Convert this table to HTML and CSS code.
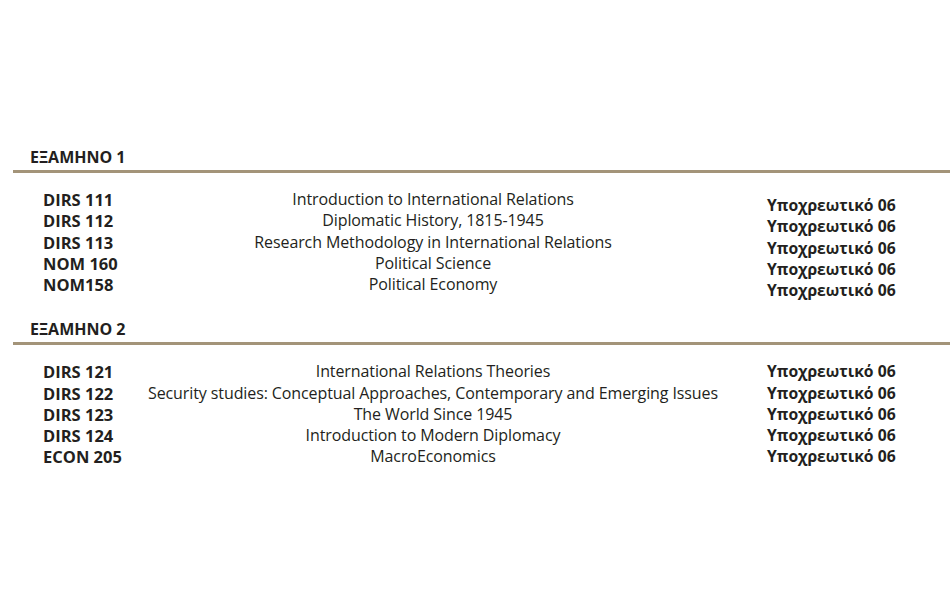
FILE: index.html
```html
<!DOCTYPE html>
<html lang="el">
<head>
<meta charset="utf-8">
<title>Πρόγραμμα Σπουδών</title>
<link rel="stylesheet" href="styles.css">
</head>
<body>
<main class="page">
  <section class="semester first">
    <h2 class="sem-title">ΕΞΑΜΗΝΟ 1</h2>
    <div class="rule"></div>
    <div class="courses">
      <div class="col codes">
        <div>DIRS 111</div>
        <div>DIRS 112</div>
        <div>DIRS 113</div>
        <div>NOM 160</div>
        <div>NOM158</div>
      </div>
      <div class="col titles">
        <div>Introduction to International Relations</div>
        <div>Diplomatic History, 1815-1945</div>
        <div>Research Methodology in International Relations</div>
        <div>Political Science</div>
        <div>Political Economy</div>
      </div>
      <div class="col status shifted">
        <div>Υποχρεωτικό 06</div>
        <div>Υποχρεωτικό 06</div>
        <div>Υποχρεωτικό 06</div>
        <div>Υποχρεωτικό 06</div>
        <div>Υποχρεωτικό 06</div>
      </div>
    </div>
  </section>
  <section class="semester">
    <h2 class="sem-title">ΕΞΑΜΗΝΟ 2</h2>
    <div class="rule"></div>
    <div class="courses">
      <div class="col codes">
        <div>DIRS 121</div>
        <div>DIRS 122</div>
        <div>DIRS 123</div>
        <div>DIRS 124</div>
        <div>ECON 205</div>
      </div>
      <div class="col titles">
        <div>International Relations Theories</div>
        <div>Security studies: Conceptual Approaches, Contemporary and Emerging Issues</div>
        <div>The World Since 1945</div>
        <div>Introduction to Modern Diplomacy</div>
        <div>MacroEconomics</div>
      </div>
      <div class="col status">
        <div>Υποχρεωτικό 06</div>
        <div>Υποχρεωτικό 06</div>
        <div>Υποχρεωτικό 06</div>
        <div>Υποχρεωτικό 06</div>
        <div>Υποχρεωτικό 06</div>
      </div>
    </div>
  </section>
</main>
</body>
</html>
```
FILE: styles.css
```css
html, body {
  margin: 0;
  padding: 0;
  background: #ffffff;
}
body {
  font-family: "Open Sans", "Noto Sans", sans-serif;
  color: #231f20;
  width: 952px;
  height: 599px;
  overflow: hidden;
}
.page {
  padding-top: 147px;
}
.semester + .semester {
  margin-top: 18px;
}
.sem-title {
  margin: 0;
  padding-left: 30px;
  font-size: 16px;
  line-height: 20px;
  font-weight: 700;
}
.rule {
  margin: 3px 2px 0 13px;
  height: 3px;
  background: #a39479;
}
.courses {
  display: flex;
  padding: 16px 0 0 43px;
}
.col > div {
  height: 21.25px;
  line-height: 21.25px;
  white-space: nowrap;
}
.codes {
  width: 105px;
  font-size: 16.5px;
  font-weight: 700;
}
.titles {
  width: 570px;
  text-align: center;
  font-size: 16px;
  letter-spacing: -0.1px;
}
.status {
  margin-left: 49px;
  font-size: 15.7px;
  font-weight: 700;
}
.status.shifted {
  padding-top: 6px;
}
```
